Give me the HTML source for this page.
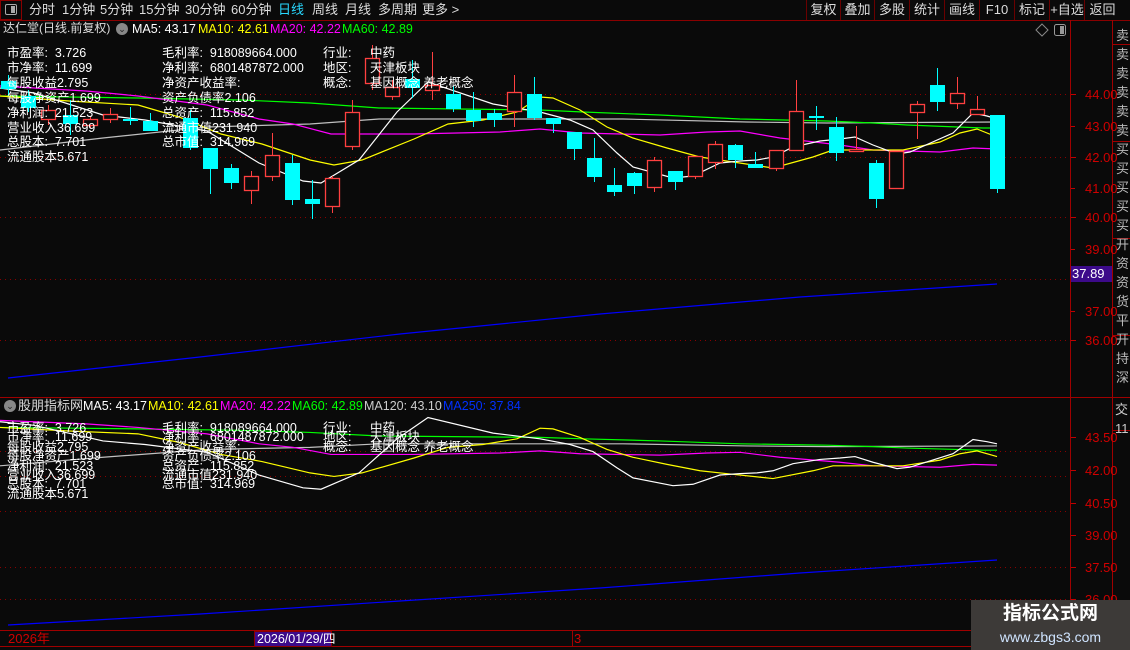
<!DOCTYPE html>
<html><head><meta charset="utf-8">
<style>
*{margin:0;padding:0;box-sizing:border-box}
body{width:1130px;height:650px;background:#0a0a0a;overflow:hidden;position:relative;font-family:"Liberation Sans","Noto Sans CJK SC",sans-serif;color:#fff}
.a{position:absolute;white-space:nowrap;line-height:1}
.tb{font-size:13px;color:#ddd;top:3px}
.btn{position:absolute;top:0;height:20px;border-left:1px solid #6a0000;font-size:13px;color:#ddd;text-align:center;line-height:20px}
.t{font-size:12.5px;color:#fff}
.ax{font-size:13px;color:#d00000;left:1085px}
</style></head><body>
<div class="a" style="left:0;top:0;width:22px;height:20px;border:1px solid #8a0000"></div>
<div class="a" style="left:5px;top:4px;width:12px;height:11px;border:1px solid #aaa;border-radius:2px"></div>
<div class="a" style="left:11px;top:6px;width:4px;height:7px;background:#aaa"></div>
<div class="a tb" style="left:29px">分时</div>
<div class="a tb" style="left:62px">1分钟</div>
<div class="a tb" style="left:100px">5分钟</div>
<div class="a tb" style="left:139px">15分钟</div>
<div class="a tb" style="left:185px">30分钟</div>
<div class="a tb" style="left:231px">60分钟</div>
<div class="a tb" style="left:278px;color:#28d8ff">日线</div>
<div class="a tb" style="left:312px">周线</div>
<div class="a tb" style="left:345px">月线</div>
<div class="a tb" style="left:378px">多周期</div>
<div class="a tb" style="left:422px">更多 &gt;</div>
<div class="btn" style="left:806px;width:34px">复权</div>
<div class="btn" style="left:840px;width:34px">叠加</div>
<div class="btn" style="left:874px;width:35px">多股</div>
<div class="btn" style="left:909px;width:35px">统计</div>
<div class="btn" style="left:944px;width:35px">画线</div>
<div class="btn" style="left:979px;width:35px">F10</div>
<div class="btn" style="left:1014px;width:35px">标记</div>
<div class="btn" style="left:1049px;width:35px">+自选</div>
<div class="btn" style="left:1084px;width:36px">返回</div>
<div class="a" style="left:0;top:20px;width:1130px;height:1px;background:#8a0000"></div>

<div class="a" style="left:3px;top:22px;font-size:12px;color:#ddd">达仁堂(日线.前复权)</div>
<div class="a" style="left:116px;top:23px;width:12px;height:12px;border-radius:50%;background:#888;color:#222;font-size:9px;text-align:center;line-height:12px">⌄</div>
<div class="a" style="left:132px;top:23px;font-size:12.5px;color:#fff">MA5: 43.17</div>
<div class="a" style="left:198px;top:23px;font-size:12.5px;color:#ffff00">MA10: 42.61</div>
<div class="a" style="left:270px;top:23px;font-size:12.5px;color:#ff00ff">MA20: 42.22</div>
<div class="a" style="left:342px;top:23px;font-size:12.5px;color:#00ff00">MA60: 42.89</div>

<svg class="a" style="left:0;top:0" width="1130" height="650">
<g stroke="#8a0000" stroke-dasharray="1 4" stroke-width="1">
<line x1="0" y1="94.5" x2="1070" y2="94.5"/><line x1="0" y1="157.5" x2="1070" y2="157.5"/>
<line x1="0" y1="217.5" x2="1070" y2="217.5"/><line x1="0" y1="279.5" x2="1070" y2="279.5"/>
<line x1="0" y1="340.5" x2="1070" y2="340.5"/>
<line x1="0" y1="451.5" x2="1070" y2="451.5"/><line x1="0" y1="476.5" x2="1070" y2="476.5"/>
<line x1="0" y1="511.5" x2="1070" y2="511.5"/><line x1="0" y1="567.5" x2="1070" y2="567.5"/>
<line x1="0" y1="599.5" x2="1070" y2="599.5"/>
</g>
<line x1="1070.5" y1="20" x2="1070.5" y2="650" stroke="#a00000"/>
<line x1="1112.5" y1="20" x2="1112.5" y2="650" stroke="#a00000"/>
<line x1="0" y1="397.5" x2="1130" y2="397.5" stroke="#a00000"/>
<line x1="0" y1="630.5" x2="1130" y2="630.5" stroke="#a00000"/>
<line x1="0" y1="646.5" x2="1130" y2="646.5" stroke="#a00000"/>
<line x1="572.5" y1="631" x2="572.5" y2="646" stroke="#a00000"/>
<g stroke="#c00000">
<line x1="1071" y1="94.5" x2="1076" y2="94.5"/><line x1="1071" y1="126.5" x2="1075" y2="126.5"/><line x1="1071" y1="157.5" x2="1076" y2="157.5"/><line x1="1071" y1="188.5" x2="1075" y2="188.5"/><line x1="1071" y1="217.5" x2="1076" y2="217.5"/><line x1="1071" y1="249.5" x2="1075" y2="249.5"/><line x1="1071" y1="311.5" x2="1075" y2="311.5"/><line x1="1071" y1="340.5" x2="1076" y2="340.5"/>
<line x1="1071" y1="437.5" x2="1076" y2="437.5"/><line x1="1071" y1="470.5" x2="1076" y2="470.5"/><line x1="1071" y1="503.5" x2="1076" y2="503.5"/><line x1="1071" y1="535.5" x2="1076" y2="535.5"/><line x1="1071" y1="567.5" x2="1076" y2="567.5"/><line x1="1071" y1="599.5" x2="1076" y2="599.5"/>
</g>
<g stroke="#a00000"><line x1="1112" y1="44.5" x2="1130" y2="44.5"/><line x1="1112" y1="141.5" x2="1130" y2="141.5"/><line x1="1112" y1="238.5" x2="1130" y2="238.5"/><line x1="1112" y1="335.5" x2="1130" y2="335.5"/><line x1="1112" y1="430.5" x2="1130" y2="430.5"/></g>

<g fill="none" stroke-width="1.2">
<polyline stroke="#0000ff" points="8,378 200,357 400,334 600,314 800,297 997,284"/>
<polyline stroke="#c0c0c0" points="0,150 103,138 207,127 310,124 379,119 540,119 623,119 747,122 827,123 997,122"/>
<polyline stroke="#00ff00" points="0,96 138,98 241,100 310,103 379,108 540,110 583,112 660,115 740,119 827,121 873,123 907,125 983,128 997,128"/>
<polyline stroke="#ff00ff" points="0,86 86,91 138,96 207,105 259,119 293,124 331,134 414,134 500,132 540,129 580,133 660,135 707,132 740,131 780,138 840,145 873,150 940,152 973,148 997,149"/>
<polyline stroke="#ffff00" points="0,96 69,101 138,105 179,117 221,134 262,144 310,160 334,165 362,160 414,139 448,124 483,120 517,112 540,97 553,98 580,110 607,127 633,138 667,148 700,157 733,162 773,168 813,157 833,150 873,150 903,150 940,142 960,133 977,129 997,137"/>
<polyline stroke="#ffffff" points="0,88 34,93 103,115 145,120 207,131 259,163 303,181 321,183 359,160 397,112 428,82 493,104 540,112 570,120 593,130 617,153 633,167 673,178 693,176 720,163 740,161 757,160 773,157 793,147 820,141 840,139 855,137 873,145 897,154 910,152 953,133 973,113 987,116 997,119"/>
</g>
<g id="candles"></g>

<g fill="none" stroke-width="1.2">
<polyline stroke="#0000ff" points="8,625 200,614 400,601 600,588 800,573 997,560"/>
<g transform="translate(0,359.3) scale(1,0.71)">
<polyline vector-effect="non-scaling-stroke" stroke="#c0c0c0" points="0,150 103,138 207,127 310,124 379,119 540,119 623,119 747,122 827,123 997,122"/>
<polyline vector-effect="non-scaling-stroke" stroke="#00ff00" points="0,96 138,98 241,100 310,103 379,108 540,110 583,112 660,115 740,119 827,121 873,123 907,125 983,128 997,128"/>
<polyline vector-effect="non-scaling-stroke" stroke="#ff00ff" points="0,86 86,91 138,96 207,105 259,119 293,124 331,134 414,134 500,132 540,129 580,133 660,135 707,132 740,131 780,138 840,145 873,150 940,152 973,148 997,149"/>
<polyline vector-effect="non-scaling-stroke" stroke="#ffff00" points="0,96 69,101 138,105 179,117 221,134 262,144 310,160 334,165 362,160 414,139 448,124 483,120 517,112 540,97 553,98 580,110 607,127 633,138 667,148 700,157 733,162 773,168 813,157 833,150 873,150 903,150 940,142 960,133 977,129 997,137"/>
<polyline vector-effect="non-scaling-stroke" stroke="#ffffff" points="0,88 34,93 103,115 145,120 207,131 259,163 303,181 321,183 359,160 397,112 428,82 493,104 540,112 570,120 593,130 617,153 633,167 673,178 693,176 720,163 740,161 757,160 773,157 793,147 820,141 840,139 855,137 873,145 897,154 910,152 953,133 973,113 987,116 997,119"/>
</g></g>
<path d="M1042 24 L1048 30 L1042 36 L1036 30 Z" fill="none" stroke="#888"/>
<rect x="1054.5" y="24.5" width="11" height="11" rx="2" fill="none" stroke="#999"/>
<rect x="1060" y="26" width="4" height="8" fill="#999"/>
</svg>

<div class="a ax" style="top:88px">44.00</div>
<div class="a ax" style="top:120px">43.00</div>
<div class="a ax" style="top:151px">42.00</div>
<div class="a ax" style="top:182px">41.00</div>
<div class="a ax" style="top:211px">40.00</div>
<div class="a ax" style="top:243px">39.00</div>
<div class="a ax" style="top:305px">37.00</div>
<div class="a ax" style="top:334px">36.00</div>
<div class="a" style="left:1071px;top:266px;width:41px;height:16px;background:#3c0a8a;color:#fff;font-size:13px;line-height:16px;padding-left:1px">37.89</div>
<div class="a ax" style="top:431px">43.50</div>
<div class="a ax" style="top:464px">42.00</div>
<div class="a ax" style="top:497px">40.50</div>
<div class="a ax" style="top:529px">39.00</div>
<div class="a ax" style="top:561px">37.50</div>
<div class="a ax" style="top:593px">36.00</div>
<div class="a" style="left:1113px;top:26px;width:17px;height:370px;overflow:hidden"><div style="position:absolute;left:3px;top:0;width:14px;font-size:13px;line-height:19px;color:#bbb;white-space:normal">卖卖卖卖卖卖买买买买买开资资货平开持深</div></div>
<div class="a" style="left:1115px;top:400px;font-size:13px;color:#ccc;line-height:19px;white-space:normal;width:14px">交11</div>

<div class="a t" style="left:7px;top:46px;line-height:14.9px">市盈率:&nbsp;&nbsp;3.726<br>市净率:&nbsp;&nbsp;11.699<br>每股收益2.795<br>每股净资产1.699<br>净利润:&nbsp;&nbsp;21.523<br>营业收入36.699<br>总股本:&nbsp;&nbsp;7.701<br>流通股本5.671</div>
<div class="a t" style="left:162px;top:46px;line-height:14.9px">毛利率:&nbsp;&nbsp;918089664.000<br>净利率:&nbsp;&nbsp;6801487872.000<br>净资产收益率:<br>资产负债率2.106<br>总资产:&nbsp;&nbsp;115.852<br>流通市值231.940<br>总市值:&nbsp;&nbsp;314.969</div>
<div class="a t" style="left:323px;top:46px;line-height:14.9px">行业:<br>地区:<br>概念:</div>
<div class="a t" style="left:370px;top:46px;line-height:14.9px">中药<br>天津板块<br>基因概念 养老概念</div>

<div class="a" style="left:4px;top:400px;width:12px;height:12px;border-radius:50%;background:#888;color:#222;font-size:9px;text-align:center;line-height:12px">⌄</div>
<div class="a" style="left:18px;top:399px;font-size:13px;color:#ddd">股朋指标网</div>
<div class="a" style="left:83px;top:400px;font-size:12.5px;color:#fff">MA5: 43.17</div>
<div class="a" style="left:148px;top:400px;font-size:12.5px;color:#ffff00">MA10: 42.61</div>
<div class="a" style="left:220px;top:400px;font-size:12.5px;color:#ff00ff">MA20: 42.22</div>
<div class="a" style="left:292px;top:400px;font-size:12.5px;color:#00ff00">MA60: 42.89</div>
<div class="a" style="left:364px;top:400px;font-size:12.5px;color:#ccc">MA120: 43.10</div>
<div class="a" style="left:443px;top:400px;font-size:12.5px;color:#0030ff">MA250: 37.84</div>

<div class="a t" style="left:7px;top:424px;line-height:9.4px">市盈率:&nbsp;&nbsp;3.726<br>市净率:&nbsp;&nbsp;11.699<br>每股收益2.795<br>每股净资产1.699<br>净利润:&nbsp;&nbsp;21.523<br>营业收入36.699<br>总股本:&nbsp;&nbsp;7.701<br>流通股本5.671</div>
<div class="a t" style="left:162px;top:424px;line-height:9.4px">毛利率:&nbsp;&nbsp;918089664.000<br>净利率:&nbsp;&nbsp;6801487872.000<br>净资产收益率:<br>资产负债率2.106<br>总资产:&nbsp;&nbsp;115.852<br>流通市值231.940<br>总市值:&nbsp;&nbsp;314.969</div>
<div class="a t" style="left:323px;top:424px;line-height:9.4px">行业:<br>地区:<br>概念:</div>
<div class="a t" style="left:370px;top:424px;line-height:9.4px">中药<br>天津板块<br>基因概念 养老概念</div>

<div class="a" style="left:8px;top:632px;font-size:13px;color:#d00000">2026年</div>
<div class="a" style="left:254px;top:631px;width:78px;height:16px;background:#3c0a8a;border:1px solid #8a0000;color:#fff;font-size:12.5px;line-height:14px;padding-left:2px">2026/01/29/四</div>
<div class="a" style="left:574px;top:632px;font-size:13px;color:#d00000">3</div>

<div class="a" style="left:971px;top:600px;width:159px;height:50px;background:#3d3a38"></div>
<div class="a" style="left:971px;top:604px;width:159px;text-align:center;font-size:19px;font-weight:bold;color:#fff">指标公式网</div>
<div class="a" style="left:971px;top:630px;width:159px;text-align:center;font-size:14px;color:#cfe4ff">www.zbgs3.com</div>

<script>
var C=[
[8,81,89,75,95,0],[28,96,108,90,112,0],[48,110,119,105,125,1],[70,115,124,100,135,0],[90,119,125,116,128,1],[110,114,119,108,123,1],[130,119,121,107,125,0],[150,121,131,113,131,0],[190,118,148,110,150,0],[210,148,169,148,194,0],[231,168,183,164,189,0],[251,176,190,171,204,1],[272,155,176,133,181,1],[292,163,200,155,205,0],[312,199,204,180,219,0],[332,178,206,176,213,1],[352,112,146,100,150,1],[372,58,83,45,90,1],[392,87,96,80,100,1],[412,79,88,60,98,0],[432,85,90,52,100,1],[453,94,109,86,112,0],[473,110,121,92,127,0],[494,113,120,109,127,0],[514,92,111,75,127,1],[534,94,118,77,120,0],[553,118,124,118,133,0],[574,132,149,132,160,0],[594,158,177,138,182,0],[614,185,192,168,196,0],[634,173,186,172,194,0],[654,160,187,157,192,1],[675,171,182,171,190,0],[695,156,176,156,179,1],[715,144,162,141,169,1],[735,145,160,144,168,0],[755,164,168,152,168,0],[776,150,168,150,171,1],[796,111,150,80,150,1],[816,116,118,106,130,0],[836,127,153,117,161,0],[856,149,151,126,152,1],[876,163,199,160,208,0],[896,151,188,151,189,1],[917,104,112,101,139,1],[937,85,102,68,111,0],[957,93,103,77,109,1],[977,109,114,96,114,1],[997,115,189,115,193,0]];
var g=document.getElementById('candles'),s='';
C.forEach(function(c){var x=c[0],col=c[5]?'#ff4040':'#00ffff';
s+='<line x1="'+(x+.5)+'" y1="'+c[3]+'" x2="'+(x+.5)+'" y2="'+c[4]+'" stroke="'+col+'"/>';
if(c[5])s+='<rect x="'+(x-6.5)+'" y="'+(c[1]+.5)+'" width="14" height="'+Math.max(1,c[2]-c[1])+'" fill="#0a0a0a" stroke="'+col+'" stroke-width="1.3"/>';
else s+='<rect x="'+(x-7)+'" y="'+c[1]+'" width="15" height="'+Math.max(2,c[2]-c[1])+'" fill="'+col+'"/>';});
g.innerHTML=s;
</script>
</body></html>
